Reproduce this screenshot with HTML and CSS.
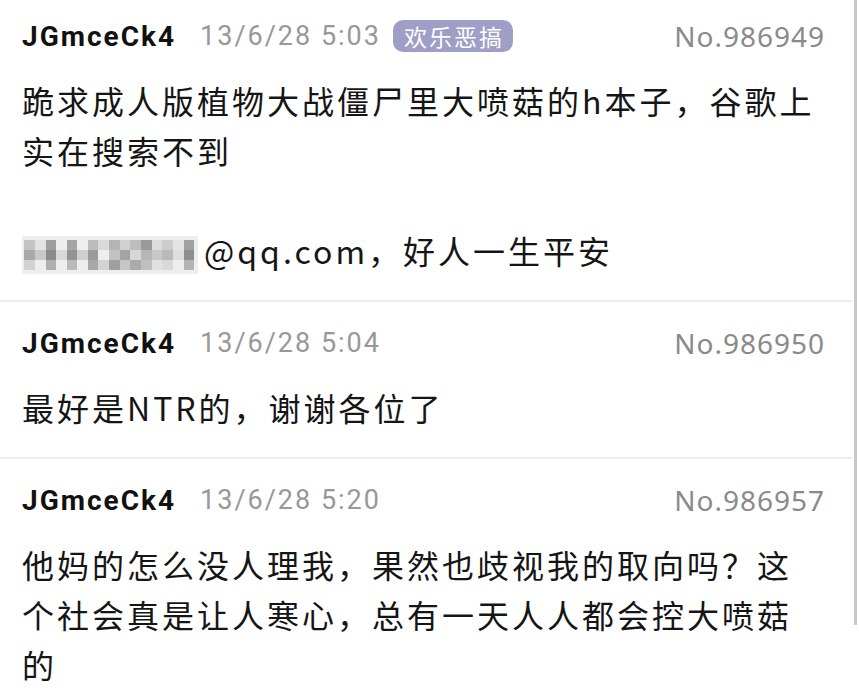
FILE: index.html
```html
<!DOCTYPE html>
<html lang="zh-CN">
<head>
    <meta charset="UTF-8">
    <meta name="viewport" content="width=device-width, initial-scale=1.0">
    <title>欢乐恶搞</title>
    <link rel="stylesheet" href="styles.css">
</head>
<body>
    <div class="page">
        <div class="thread">
            <div class="post first">
                <div class="post-head">
                    <span class="user">JGmceCk4</span>
                    <span class="time">13/6/28 5:03</span>
                    <span class="tag">欢乐恶搞</span>
                    <span class="no">No.986949</span>
                </div>
                <div class="post-body">
                    跪求成人版植物大战僵尸里大喷菇的h本子，谷歌上实在搜索不到<br><br>
                    <span class="masked">
                        <svg width="176" height="38" viewBox="0 0 176 38">
                            <rect x="0" y="0" width="176" height="38" fill="#eeeeee"/>
                            <rect x="2" y="4" width="11" height="10" fill="#c4c4c4"/>
                            <rect x="2" y="14" width="11" height="10" fill="#a9a9a9"/>
                            <rect x="2" y="24" width="11" height="10" fill="#d2d2d2"/>
                            <rect x="13" y="4" width="11" height="10" fill="#e2e2e2"/>
                            <rect x="13" y="14" width="11" height="10" fill="#c9c9c9"/>
                            <rect x="24" y="4" width="10" height="10" fill="#9e9e9e"/>
                            <rect x="24" y="14" width="10" height="10" fill="#8c8c8c"/>
                            <rect x="24" y="24" width="10" height="10" fill="#b0b0b0"/>
                            <rect x="34" y="14" width="11" height="10" fill="#d8d8d8"/>
                            <rect x="45" y="4" width="10" height="10" fill="#a5a5a5"/>
                            <rect x="45" y="14" width="10" height="10" fill="#939393"/>
                            <rect x="45" y="24" width="10" height="10" fill="#b9b9b9"/>
                            <rect x="55" y="14" width="11" height="10" fill="#cfcfcf"/>
                            <rect x="66" y="4" width="10" height="10" fill="#bcbcbc"/>
                            <rect x="66" y="14" width="10" height="10" fill="#9b9b9b"/>
                            <rect x="66" y="24" width="10" height="10" fill="#a8a8a8"/>
                            <rect x="76" y="4" width="11" height="10" fill="#dadada"/>
                            <rect x="76" y="24" width="11" height="10" fill="#d4d4d4"/>
                            <rect x="87" y="4" width="11" height="10" fill="#b4b4b4"/>
                            <rect x="87" y="14" width="11" height="10" fill="#c2c2c2"/>
                            <rect x="87" y="24" width="11" height="10" fill="#9f9f9f"/>
                            <rect x="98" y="4" width="10" height="10" fill="#d0d0d0"/>
                            <rect x="98" y="14" width="10" height="10" fill="#a3a3a3"/>
                            <rect x="98" y="24" width="10" height="10" fill="#c6c6c6"/>
                            <rect x="108" y="4" width="11" height="10" fill="#bdbdbd"/>
                            <rect x="108" y="14" width="11" height="10" fill="#d7d7d7"/>
                            <rect x="108" y="24" width="11" height="10" fill="#ababab"/>
                            <rect x="119" y="4" width="11" height="10" fill="#9a9a9a"/>
                            <rect x="119" y="14" width="11" height="10" fill="#b7b7b7"/>
                            <rect x="119" y="24" width="11" height="10" fill="#c0c0c0"/>
                            <rect x="130" y="4" width="10" height="10" fill="#dcdcdc"/>
                            <rect x="130" y="14" width="10" height="10" fill="#c8c8c8"/>
                            <rect x="130" y="24" width="10" height="10" fill="#e0e0e0"/>
                            <rect x="140" y="4" width="11" height="10" fill="#cccccc"/>
                            <rect x="140" y="14" width="11" height="10" fill="#bababa"/>
                            <rect x="140" y="24" width="11" height="10" fill="#d9d9d9"/>
                            <rect x="151" y="4" width="11" height="10" fill="#e4e4e4"/>
                            <rect x="151" y="14" width="11" height="10" fill="#dedede"/>
                            <rect x="162" y="4" width="10" height="10" fill="#a1a1a1"/>
                            <rect x="162" y="14" width="10" height="10" fill="#8f8f8f"/>
                            <rect x="162" y="24" width="10" height="10" fill="#b3b3b3"/>
                        </svg>
                    </span>@qq.com，好人一生平安
                </div>
            </div>

            <div class="post">
                <div class="post-head">
                    <span class="user">JGmceCk4</span>
                    <span class="time">13/6/28 5:04</span>
                    <span class="no">No.986950</span>
                </div>
                <div class="post-body">最好是NTR的，谢谢各位了</div>
            </div>

            <div class="post">
                <div class="post-head">
                    <span class="user">JGmceCk4</span>
                    <span class="time">13/6/28 5:20</span>
                    <span class="no">No.986957</span>
                </div>
                <div class="post-body">他妈的怎么没人理我，果然也歧视我的取向吗？这<br>个社会真是让人寒心，总有一天人人都会控大喷菇<br>的</div>
            </div>
        </div>
        <div class="scrollbar"></div>
    </div>
</body>
</html>
```

FILE: styles.css
```css
body {
    margin: 0;
    background-color: #fff;
    font-family: "Noto Sans CJK SC", sans-serif;
    color: #151515;
}

.page {
    display: flex;
    align-items: flex-start;
}

.thread {
    flex: 1;
}

.post {
    padding: 19px 20px 25px 22px;
    border-bottom: 2px solid #ececec;
}

.post.first {
    padding-top: 14px;
}

.post:last-child {
    border-bottom: none;
}

.post-head {
    display: flex;
    align-items: center;
    height: 44px;
    margin-bottom: 17px;
    padding-right: 7px;
}

.user {
    font-family: Roboto, sans-serif;
    font-weight: bold;
    font-size: 28px;
    letter-spacing: 2px;
    color: #111;
}

.time {
    font-family: Roboto, sans-serif;
    font-size: 27px;
    letter-spacing: 2px;
    color: #989898;
    margin-left: 24px;
}

.tag {
    margin-left: 12px;
    padding: 0 9px 0 11px;
    height: 32px;
    line-height: 32px;
    border-radius: 10px;
    background-color: #9f9ec6;
    color: #fff;
    font-size: 23px;
    letter-spacing: 2px;
}

.no {
    margin-left: auto;
    font-family: "Noto Sans", sans-serif;
    font-size: 28px;
    letter-spacing: 1px;
    color: #8a8a8a;
}

.post-body {
    font-size: 32px;
    letter-spacing: 3px;
    line-height: 50px;
}

.masked {
    display: inline-block;
    vertical-align: middle;
    margin-right: 6px;
    line-height: 0;
    filter: blur(0.6px);
}

.scrollbar {
    width: 3px;
    height: 625px;
    margin: 0 2px 0 2px;
    background-color: #c9c9c9;
}
```
